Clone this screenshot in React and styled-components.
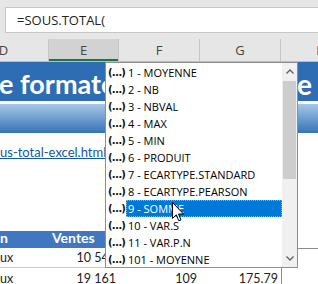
import React from "react";
import styled, { createGlobalStyle } from "styled-components";

const Global = createGlobalStyle`
  html, body { margin: 0; padding: 0; background: #fff; overflow: hidden; }
  #root { width: 318px; height: 284px; }
`;

const Frame = styled.div`
  position: relative;
  width: 318px;
  height: 284px;
  overflow: hidden;
  background: #fff;
  font-family: Lato, "Liberation Sans", sans-serif;
`;

const FormulaArea = styled.div`
  background: #e6e6e6;
  padding: 7px 0 6px 5px;
`;

const FormulaBox = styled.div`
  height: 24px;
  background: #fff;
  border: 1px solid #c6c6c6;
  border-right: none;
  display: flex;
  align-items: center;
  padding-left: 11px;
  font-family: "Open Sans", sans-serif;
  font-size: 13px;
  color: #222;
`;

const HeaderRow = styled.div`
  display: grid;
  grid-template-columns: 90px 70px 81px 81px 81px;
  margin-left: -41px;
  height: 22px;
  background: #e6e6e6;
  border-bottom: 1px solid #bdbdbd;
`;

const ColHead = styled.div`
  display: flex;
  align-items: center;
  justify-content: center;
  font-family: "Open Sans", sans-serif;
  font-size: 13px;
  color: #444;
  border-right: 1px solid #c6c6c6;
  background: ${(p) => (p.$selected ? "#d2d2d2" : "transparent")};
  box-shadow: ${(p) => (p.$selected ? "inset 0 -2px 0 #217346" : "none")};
`;

const TitleRow = styled.div`
  height: 39px;
  background: #2e6db4;
  display: flex;
  align-items: flex-end;
  overflow: hidden;
  white-space: nowrap;
  color: #fff;
  font-weight: 700;
  font-size: 27px;
  line-height: 34px;
`;

const TitleLeft = styled.span`
  flex: 0 0 298px;
  overflow: hidden;
  margin-left: -1px;
`;

const TitleRight = styled.span`
  flex: none;
  font-size: 28px;
`;

const GapRow = styled.div`
  height: ${(p) => p.$h}px;
`;

const GradientRow = styled.div`
  height: 29px;
  background: linear-gradient(#a6c7e8, #3674b6);
`;

const LinkRow = styled.div`
  height: 20px;
  display: flex;
  align-items: flex-end;
  font-size: 13px;
  line-height: 17px;
`;

const Link = styled.span`
  color: #14589f;
  text-decoration: underline;
  white-space: nowrap;
`;

const TableRow = styled.div`
  display: grid;
  grid-template-columns: 49px 70px 81px 81px 1fr;
  height: ${(p) => p.$h}px;
  font-size: 12.5px;
`;

const Cell = styled.div`
  display: flex;
  align-items: flex-end;
  justify-content: ${(p) => (p.$right ? "flex-end" : "flex-start")};
  padding: 0 3px 2px 3px;
  white-space: nowrap;
  overflow: hidden;
  color: ${(p) => (p.$head ? "#fff" : "#222")};
  font-weight: ${(p) => (p.$head ? 700 : 400)};
  font-size: ${(p) => (p.$head ? "14px" : "inherit")};
  background: ${(p) => (p.$head ? "#4176c0" : "transparent")};
  border-bottom: ${(p) => (p.$line ? "1px solid #c8c8c8" : "none")};
  ${(p) => (p.$label ? "padding-left: 0;" : "")}
`;

const EdgeCell = styled.div`
  border-left: 1px solid #8c8c8c;
  border-top: ${(p) => (p.$top ? "1px solid #8c8c8c" : "none")};
`;

const Dropdown = styled.div`
  position: absolute;
  left: 105px;
  top: 62px;
  width: 191px;
  height: 204px;
  border: 1px solid #8f8f8f;
  background: #fff;
  display: flex;
`;

const List = styled.div`
  flex: 1;
  padding-top: 1px;
  display: flex;
  flex-direction: column;
`;

const Item = styled.div`
  height: 17px;
  display: flex;
  align-items: center;
  font-family: "Open Sans", sans-serif;
  font-size: 11px;
`;

const FnIcon = styled.span`
  flex: 0 0 18px;
  margin-left: 2px;
  font-family: "DejaVu Sans", sans-serif;
  font-weight: 700;
  font-size: 10px;
  color: #111;
  letter-spacing: -0.6px;
  line-height: 17px;
`;

const Label = styled.span`
  flex: 1;
  height: 17px;
  line-height: 17px;
  padding-left: 2px;
  box-sizing: border-box;
  color: ${(p) => (p.$active ? "#fff" : "#000")};
  background: ${(p) => (p.$active ? "#0078d7" : "transparent")};
  outline: ${(p) => (p.$active ? "1px dotted #7fb6e8" : "none")};
  outline-offset: -1px;
  white-space: nowrap;
`;

const Scrollbar = styled.div`
  flex: 0 0 15px;
  background: #f0f0f0;
  display: flex;
  flex-direction: column;
  align-items: center;
`;

const Arrow = styled.div`
  height: 17px;
  display: flex;
  align-items: center;
  justify-content: center;
  width: 100%;
`;

const Thumb = styled.div`
  width: 13px;
  height: 98px;
  margin-top: 1px;
  background: #cdcdcd;
`;

const Track = styled.div`
  flex: 1;
`;

const Cursor = styled.svg`
  position: absolute;
  left: 172px;
  top: 202px;
`;

const items = [
  "1 - MOYENNE",
  "2 - NB",
  "3 - NBVAL",
  "4 - MAX",
  "5 - MIN",
  "6 - PRODUIT",
  "7 - ECARTYPE.STANDARD",
  "8 - ECARTYPE.PEARSON",
  "9 - SOMME",
  "10 - VAR.S",
  "11 - VAR.P.N",
  "101 - MOYENNE",
];

const Chevron = ({ up }) => (
  <svg width="8" height="5" viewBox="0 0 8 5">
    <path
      d={up ? "M0.5 4.5 L4 1 L7.5 4.5" : "M0.5 0.5 L4 4 L7.5 0.5"}
      fill="none"
      stroke="#606060"
      strokeWidth="1.3"
    />
  </svg>
);

export default function App() {
  return (
    <>
      <Global />
      <Frame>
        <FormulaArea>
          <FormulaBox>=SOUS.TOTAL(</FormulaBox>
        </FormulaArea>
        <HeaderRow>
          <ColHead>D</ColHead>
          <ColHead $selected>E</ColHead>
          <ColHead>F</ColHead>
          <ColHead>G</ColHead>
          <ColHead>H</ColHead>
        </HeaderRow>

        <TitleRow>
          <TitleLeft>e formatée du tableau d</TitleLeft>
          <TitleRight>e sous-total</TitleRight>
        </TitleRow>
        <GapRow $h={3} />
        <GradientRow />
        <GapRow $h={8} />
        <LinkRow>
          <Link>us-total-excel.html</Link>
        </LinkRow>
        <GapRow $h={70} />
        <TableRow $h={17}>
          <Cell $head $label>n</Cell>
          <Cell $head>Ventes</Cell>
          <Cell $head $right>Quantité</Cell>
          <Cell $head $right>Prix</Cell>
          <div />
        </TableRow>
        <TableRow $h={20}>
          <Cell $label $line>ux</Cell>
          <Cell $right $line>10 540</Cell>
          <Cell $right $line>96</Cell>
          <Cell $right $line>109.79</Cell>
          <EdgeCell $top />
        </TableRow>
        <TableRow $h={20}>
          <Cell $label>ux</Cell>
          <Cell $right>19 161</Cell>
          <Cell $right>109</Cell>
          <Cell $right>175.79</Cell>
          <EdgeCell />
        </TableRow>

        <Dropdown>
          <List>
            {items.map((t, i) => (
              <Item key={t}>
                <FnIcon>(…)</FnIcon>
                <Label $active={i === 8}>{t}</Label>
              </Item>
            ))}
          </List>
          <Scrollbar>
            <Arrow>
              <Chevron up />
            </Arrow>
            <Thumb />
            <Track />
            <Arrow>
              <Chevron />
            </Arrow>
          </Scrollbar>
        </Dropdown>

        <Cursor width="13" height="21" viewBox="0 0 13 21">
          <path
            d="M0.5 0.5 L0.5 16.5 L4.3 12.8 L6.8 18.8 L9 17.9 L6.5 12 L11.5 12 Z"
            fill="#fff"
            stroke="#000"
            strokeWidth="1"
            strokeLinejoin="miter"
          />
        </Cursor>
      </Frame>
    </>
  );
}
